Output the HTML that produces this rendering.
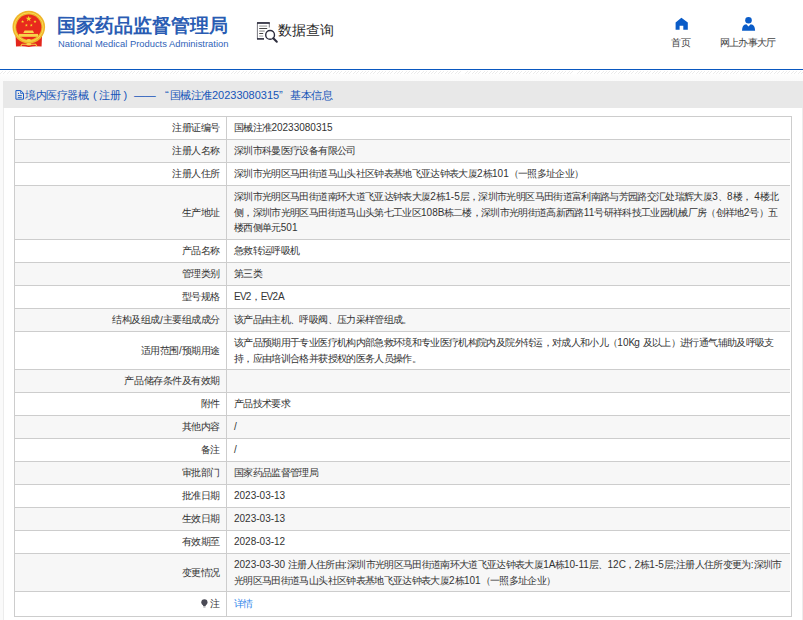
<!DOCTYPE html>
<html><head><meta charset="utf-8">
<style>
*{margin:0;padding:0;box-sizing:border-box}
html,body{width:803px;height:620px;overflow:hidden;background:#fff}
body{position:relative;font-family:"Liberation Sans",sans-serif;color:#333}
.abs{position:absolute}
.t1{left:57px;top:15px;font-size:18.6px;color:#2a5cb3;font-weight:900;white-space:nowrap;line-height:22px}
.t2{left:58px;top:38px;font-size:9.4px;color:#3063b8;white-space:nowrap;line-height:12px}
.sj{left:278px;top:19.5px;font-size:14px;letter-spacing:0;color:#2a2a2a;font-weight:500;white-space:nowrap;line-height:20px}
.nav{font-size:10px;color:#444;white-space:nowrap;line-height:12px}
.hl{left:0;top:69px;width:803px;height:1px;background:#0a58c0}
.stripe{left:0;top:71px;width:803px;height:2.5px;background:repeating-linear-gradient(135deg,#fff 0,#fff 1.7px,#ebebeb 1.7px,#ebebeb 2.4px)}
.bg{left:0;top:73px;width:803px;height:547px;background:linear-gradient(#fefefe,#fafafa 8px,#fafafa)}
.panel{left:3px;top:81px;width:800px;height:560px;background:#fff;border-left:1px solid #ececec}
.phead{left:3px;top:81px;width:800px;height:27px;background:#e8e8e8}
.ptitle{top:87.5px;font-size:11px;color:#1554b8;font-weight:500;white-space:nowrap;line-height:15px}
.pr{left:802px;top:108px;width:1px;height:512px;background:#ececec}
.tbl{left:14px;top:116px;width:778px;height:501px;border:1px solid #cdcdcd;background:#fff}
.row{position:absolute;left:15px;width:775px;display:flex;border-bottom:1px solid #cdcdcd}
.row.g{background:#f7f7f7}
.lab{flex:none;width:212px;border-right:1px solid #cdcdcd;text-align:right;padding-right:6px;display:flex;align-items:center;justify-content:flex-end;font-size:10px;white-space:nowrap;letter-spacing:-0.45px}
.val{flex:1;min-width:0;padding-left:7px;display:flex;align-items:center;font-size:10px;line-height:15.5px;letter-spacing:-0.65px;white-space:nowrap}
.a{letter-spacing:0}
.u{letter-spacing:-0.8px}
.link{color:#2f86ea}
</style></head><body>
<div class="abs bg"></div>
<!-- header -->
<svg class="abs" style="left:11px;top:10px" width="36" height="39" viewBox="0 0 36 39">
  <path d="M4.6 26 L31 26 L30.6 36.6 Q24 35.6 17.8 37 Q11.5 35.6 5 36.6 Z" fill="#e3261c"/>
  <circle cx="17.8" cy="17.1" r="16.3" fill="#efb52a"/>
  <circle cx="17.8" cy="17.1" r="14.4" fill="none" stroke="#f9dc5a" stroke-width="0.9"/>
  <circle cx="17.8" cy="17.2" r="12.6" fill="#e8291d"/>
  <polygon points="17.70,5.70 18.43,7.80 20.65,7.84 18.88,9.18 19.52,11.31 17.70,10.04 15.88,11.31 16.52,9.18 14.75,7.84 16.97,7.80" fill="#f6d42a"/>
  <polygon points="11.60,10.00 11.98,11.08 13.12,11.11 12.21,11.80 12.54,12.89 11.60,12.24 10.66,12.89 10.99,11.80 10.08,11.11 11.22,11.08" fill="#f6d42a"/>
  <polygon points="24.00,10.00 24.38,11.08 25.52,11.11 24.61,11.80 24.94,12.89 24.00,12.24 23.06,12.89 23.39,11.80 22.48,11.11 23.62,11.08" fill="#f6d42a"/>
  <polygon points="15.40,13.70 15.78,14.78 16.92,14.81 16.01,15.50 16.34,16.59 15.40,15.94 14.46,16.59 14.79,15.50 13.88,14.81 15.02,14.78" fill="#f6d42a"/>
  <polygon points="20.30,13.70 20.68,14.78 21.82,14.81 20.91,15.50 21.24,16.59 20.30,15.94 19.36,16.59 19.69,15.50 18.78,14.81 19.92,14.78" fill="#f6d42a"/>
  <path d="M12.3 23 L13.6 20.6 L21.9 20.6 L23 23 Z" fill="#f7d64a"/>
  <rect x="8" y="23.9" width="19" height="2.9" fill="#f7d64a"/>
  <path d="M11 29.5 Q17.8 33 24.6 29.5" fill="none" stroke="#f5cc40" stroke-width="1.4"/>
  <ellipse cx="17.8" cy="30.2" rx="2" ry="1.2" fill="#f7d64a"/>
  <path d="M9.5 36.5 L11 34.3 L24.6 34.3 L26 36.5" fill="none" stroke="#f5d040" stroke-width="1.1"/>
  <ellipse cx="17.8" cy="34.3" rx="2.6" ry="1.3" fill="#f7d64a"/>
</svg>
<div class="abs t1">国家药品监督管理局</div>
<div class="abs t2">National Medical Products Administration</div>
<svg class="abs" style="left:256px;top:21px" width="23" height="23" viewBox="0 0 23 23">
  <path d="M1.4 17.8 V1.8 H13.3 V6.5" fill="none" stroke="#555560" stroke-width="0.8"/>
  <rect x="1" y="1.2" width="12.8" height="1.6" fill="#2c2c3c"/>
  <rect x="1" y="17.1" width="7" height="1.6" fill="#2c2c3c"/>
  <rect x="3.2" y="4.6" width="8" height="0.9" fill="#888"/>
  <rect x="3.2" y="7.1" width="8" height="0.9" fill="#333"/>
  <rect x="3.2" y="9.6" width="5.5" height="0.9" fill="#777"/>
  <rect x="3.2" y="12.1" width="4" height="0.9" fill="#333"/>
  <rect x="3.2" y="14.6" width="4" height="0.9" fill="#999"/>
  <circle cx="14.1" cy="13.9" r="4.4" fill="none" stroke="#2c2c3c" stroke-width="1.4"/>
  <path d="M17.3 17.2 L20.8 20.7" stroke="#2c2c3c" stroke-width="2" stroke-linecap="round"/>
</svg>
<div class="abs sj">数据查询</div>
<svg class="abs" style="left:675px;top:17px" width="14" height="14" viewBox="0 0 14 14">
  <path d="M6.4 0.8 L12.8 5.5 V12.8 H8.3 V8.8 H4.6 V12.8 H0.6 V5.5 Z" fill="#0a5cc8"/>
</svg>
<div class="abs nav" style="left:651px;width:60px;text-align:center;top:37px;letter-spacing:-0.65px;text-indent:-0.65px">首页</div>
<svg class="abs" style="left:741px;top:16px" width="16" height="16" viewBox="0 0 16 16">
  <circle cx="7.5" cy="4.3" r="3.3" fill="#0a5cc8"/>
  <path d="M1 14.8 Q1 8.6 5.3 8.2 L7.5 10.6 L9.7 8.2 Q14.1 8.6 14.1 14.8 Z" fill="#0a5cc8"/>
</svg>
<div class="abs nav" style="left:708px;width:80px;text-align:center;top:37px;letter-spacing:-0.65px;text-indent:-0.65px">网上办事大厅</div>
<div class="abs hl"></div>
<div class="abs stripe"></div>
<!-- panel -->
<div class="abs panel"></div>
<div class="abs phead"></div>
<svg class="abs" style="left:15px;top:90px" width="10" height="11" viewBox="0 0 10 11">
  <path d="M0.9 0.55 H5.7 L8.5 3.3 V9.2 H0.9 Z" fill="none" stroke="#1a5cc6" stroke-width="1" stroke-linejoin="round"/>
  <path d="M5.6 0.6 V3.4 H8.4" fill="none" stroke="#1a5cc6" stroke-width="0.8"/>
  <circle cx="3.5" cy="3.4" r="0.6" fill="#1a5cc6"/>
  <rect x="2.8" y="5" width="4" height="0.9" fill="#1a5cc6"/>
  <rect x="2.8" y="6.9" width="4" height="0.9" fill="#1a5cc6"/>
</svg>
<div class="abs ptitle" style="left:25px;letter-spacing:-0.4px">境内医疗器械</div>
<div class="abs ptitle" style="left:93px">(</div>
<div class="abs ptitle" style="left:99px;letter-spacing:-0.4px">注册</div>
<div class="abs ptitle" style="left:123.5px">)</div>
<div class="abs ptitle" style="left:134px;letter-spacing:-0.3px">——</div>
<div class="abs ptitle" style="left:165px">&#8220;</div>
<div class="abs ptitle" style="left:169.5px;letter-spacing:-0.4px">国械注准<span style="letter-spacing:0">20233080315</span></div>
<div class="abs ptitle" style="left:279px">&#8221;</div>
<div class="abs ptitle" style="left:290px;letter-spacing:-0.4px">基本信息</div>
<div class="abs pr"></div>
<div class="abs tbl"></div>
<!--ROWS-->
<div class="row" style="top:117px;height:23px"><div class="lab">注册证编号</div><div class="val"><div>国械注准<span class="a">20233080315</span></div></div></div>
<div class="row g" style="top:140px;height:23px"><div class="lab">注册人名称</div><div class="val"><div>深圳市科曼医疗设备有限公司</div></div></div>
<div class="row" style="top:163px;height:23px"><div class="lab">注册人住所</div><div class="val"><div>深圳市光明区马田街道马山头社区钟表基地飞亚达钟表大厦<span class="a">2</span>栋<span class="a">101</span>（一照多址企业）</div></div></div>
<div class="row g" style="top:186px;height:54px"><div class="lab">生产地址</div><div class="val"><div>深圳市光明区马田街道南环大道飞亚达钟表大厦<span class="a">2</span>栋<span class="a">1-5</span>层，深圳市光明区马田街道富利南路与芳园路交汇处瑞辉大厦<span class="a">3</span>、<span class="a">8</span>楼，<span class="a"> 4</span>楼北<br>侧，深圳市光明区马田街道马山头第七工业区<span class="a">108<span class="u">B</span></span>栋二楼，深圳市光明街道高新西路<span class="a">11</span>号研祥科技工业园机械厂房（创祥地<span class="a">2</span>号）五<br>楼西侧单元<span class="a">501</span></div></div></div>
<div class="row" style="top:240px;height:23px"><div class="lab">产品名称</div><div class="val"><div>急救转运呼吸机</div></div></div>
<div class="row g" style="top:263px;height:23px"><div class="lab">管理类别</div><div class="val"><div>第三类</div></div></div>
<div class="row" style="top:286px;height:23px"><div class="lab">型号规格</div><div class="val"><div><span class="a"><span class="u">E</span><span class="u">V</span>2</span>，<span class="a"><span class="u">E</span><span class="u">V</span>2<span class="u">A</span></span></div></div></div>
<div class="row g" style="top:309px;height:23px"><div class="lab">结构及组成<span class="a">/</span>主要组成成分</div><div class="val"><div>该产品由主机、呼吸阀、压力采样管组成。</div></div></div>
<div class="row" style="top:332px;height:38px"><div class="lab">适用范围<span class="a">/</span>预期用途</div><div class="val"><div>该产品预期用于专业医疗机构内部急救环境和专业医疗机构院内及院外转运，对成人和小儿（<span class="a">10<span class="u">K</span>g </span>及以上）进行通气辅助及呼吸支<br>持，应由培训合格并获授权的医务人员操作。</div></div></div>
<div class="row g" style="top:370px;height:23px"><div class="lab">产品储存条件及有效期</div><div class="val"><div></div></div></div>
<div class="row" style="top:393px;height:23px"><div class="lab">附件</div><div class="val"><div>产品技术要求</div></div></div>
<div class="row g" style="top:416px;height:23px"><div class="lab">其他内容</div><div class="val"><div><span class="a">/</span></div></div></div>
<div class="row" style="top:439px;height:23px"><div class="lab">备注</div><div class="val"><div><span class="a">/</span></div></div></div>
<div class="row g" style="top:462px;height:23px"><div class="lab">审批部门</div><div class="val"><div>国家药品监督管理局</div></div></div>
<div class="row" style="top:485px;height:23px"><div class="lab">批准日期</div><div class="val"><div><span class="a">2023-03-13</span></div></div></div>
<div class="row g" style="top:508px;height:23px"><div class="lab">生效日期</div><div class="val"><div><span class="a">2023-03-13</span></div></div></div>
<div class="row" style="top:531px;height:23px"><div class="lab">有效期至</div><div class="val"><div><span class="a">2028-03-12</span></div></div></div>
<div class="row g" style="top:554px;height:38px"><div class="lab">变更情况</div><div class="val"><div><span class="a">2023-03-30 </span>注册人住所由<span class="a">:</span>深圳市光明区马田街道南环大道飞亚达钟表大厦<span class="a">1<span class="u">A</span></span>栋<span class="a">10-11</span>层、<span class="a">12<span class="u">C</span></span>，<span class="a">2</span>栋<span class="a">1-5</span>层<span class="a">;</span>注册人住所变更为<span class="a">:</span>深圳市<br>光明区马田街道马山头社区钟表基地飞亚达钟表大厦<span class="a">2</span>栋<span class="a">101</span>（一照多址企业）</div></div></div>
<div class="row" style="top:592px;height:24px;border-bottom:none"><div class="lab"><svg width="7" height="9" viewBox="0 0 7 9" style="margin-right:2px;margin-top:-1px"><circle cx="3.4" cy="3.3" r="3.1" fill="#4a4a55"/><path d="M1.8 5 L5 5 L4.6 7 L2.2 7 Z" fill="#4a4a55"/><rect x="2.3" y="7.3" width="2.2" height="1.2" fill="#9a9aa0"/></svg>注</div><div class="val"><div><span class="link">详情</span></div></div></div>
<!--/ROWS-->
</body></html>
